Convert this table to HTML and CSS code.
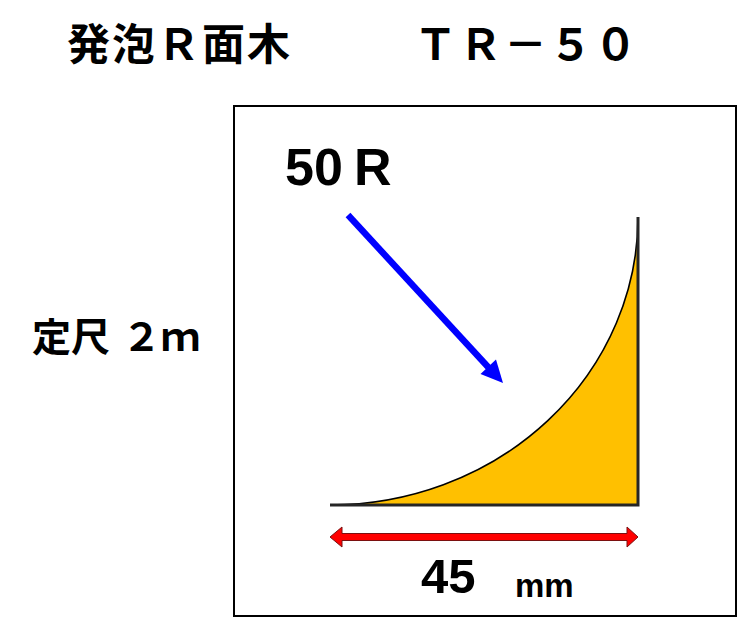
FILE: index.html
```html
<!DOCTYPE html>
<html lang="ja">
<head>
<meta charset="utf-8">
<title>発泡R面木 TR-50</title>
<link rel="stylesheet" href="styles.css">
</head>
<body>
<div class="page">
  <div class="title">
    <span class="name">発泡Ｒ面木</span>
    <span class="code">ＴＲ－５０</span>
  </div>
  <div class="main">
    <div class="label"><span>定尺</span><span class="len">２ｍ</span></div>
    <div class="box">
      <svg class="diagram" width="500" height="508" viewBox="235 107 500 508" xmlns="http://www.w3.org/2000/svg">
        <path d="M330 505 A308 288 0 0 0 638 217 L638 505 Z" fill="#FFC000"/>
        <path d="M330 505 A308 288 0 0 0 638 217" fill="none" stroke="#000" stroke-width="1.6"/>
        <path d="M330 505 L638 505 L638 217" fill="none" stroke="#262626" stroke-width="3"/>
        <line x1="348" y1="215" x2="489" y2="368" stroke="#0000FF" stroke-width="6.5"/>
        <polygon points="503,383 480.5,374 496,359.5" fill="#0000FF"/>
        <polygon points="330,537 342,527 342,533.5 627,533.5 627,527 638,537 627,547 627,540.5 342,540.5 342,547" fill="#FF0000" stroke="#7a1010" stroke-width="1"/>
        <text class="t50" x="285" y="185">50</text>
        <text class="t50" x="354" y="185">R</text>
        <text class="t45" x="421" y="593">45</text>
        <text class="tmm" x="515" y="597">mm</text>
      </svg>
    </div>
  </div>
</div>
</body>
</html>
```

FILE: styles.css
```css
html, body {
  margin: 0;
  padding: 0;
  background: #fff;
}
body {
  width: 750px;
  height: 631px;
  overflow: hidden;
  color: #000;
  font-family: "Noto Sans CJK JP", "Noto Sans", sans-serif;
}
.page {
  display: flex;
  flex-direction: column;
}
.title {
  display: flex;
  padding-top: 20px;
  padding-left: 67px;
  font-size: 43px;
  line-height: 1;
  font-weight: 700;
  letter-spacing: 2px;
  white-space: nowrap;
}
.title .code {
  margin-left: 122px;
}
.main {
  display: grid;
  grid-template-columns: 201px 504px;
  padding-left: 32px;
  margin-top: 42px;
}
.label {
  display: flex;
  margin-top: 210px;
  font-size: 39px;
  line-height: 1;
  font-weight: 700;
  letter-spacing: 0;
  white-space: nowrap;
}
.label .len {
  margin-left: 12px;
}
.box {
  width: 500px;
  height: 508px;
  border: 2px solid #000;
  background: #fff;
}
.diagram {
  display: block;
}
.t50, .t45, .tmm {
  font-family: "Liberation Sans", Arial, sans-serif;
  font-weight: 700;
  fill: #000;
}
.t50 {
  font-size: 52px;
}
.t45 {
  font-size: 49px;
}
.tmm {
  font-size: 33px;
}
```
